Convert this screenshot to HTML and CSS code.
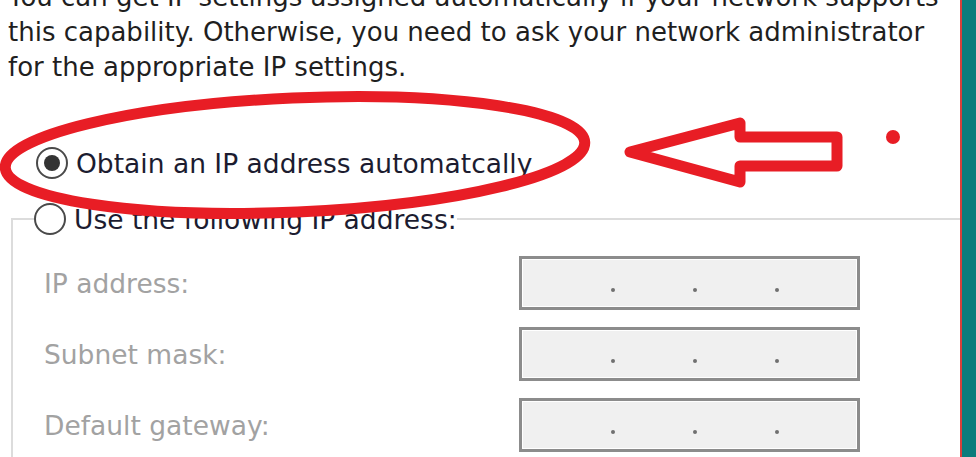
FILE: index.html
```html
<!DOCTYPE html>
<html>
<head>
    <title>Internet Protocol Version 4 Properties</title>
    <link rel="stylesheet" href="styles.css">
</head>
<body>
    <div class="page">
        <div class="dialog">
            <p class="intro">You can get IP settings assigned automatically if your network supports<br>this capability. Otherwise, you need to ask your network administrator<br>for the appropriate IP settings.</p>

            <!-- Automatic option -->
            <label class="option auto">
                <span class="radio checked"></span>
                <span>Obtain an IP address automatcally</span>
            </label>

            <!-- Manual settings group -->
            <fieldset class="group">
                <legend class="option">
                    <span class="radio"></span>
                    <span>Use the following IP address:</span>
                </legend>
                <div class="fields">
                    <span class="field-label">IP address:</span>
                    <div class="ip-box"><i></i><i></i><i></i></div>
                    <span class="field-label">Subnet mask:</span>
                    <div class="ip-box"><i></i><i></i><i></i></div>
                    <span class="field-label">Default gateway:</span>
                    <div class="ip-box"><i></i><i></i><i></i></div>
                </div>
            </fieldset>

            <!-- Red annotation drawn over the dialog -->
            <svg class="marks" width="976" height="457" viewBox="0 0 976 457">
                <ellipse cx="295" cy="155" rx="290" ry="57" transform="rotate(-2.5 295 155)" fill="none" stroke="#e81d25" stroke-width="11"/>
                <polygon points="630,152 740,123 740,137 837,137 837,166 740,166 740,182" fill="none" stroke="#e81d25" stroke-width="11" stroke-linejoin="round"/>
                <circle cx="893" cy="137" r="7" fill="#e81d25"/>
            </svg>
        </div>
        <div class="side"></div>
    </div>
</body>
</html>
```

FILE: styles.css
```css
/* IPv4 properties, zoomed in */

body {
    margin: 0;
    background: #fff;
    font-family: "DejaVu Sans", sans-serif;
    overflow: hidden;
}

.page {
    display: flex;
    width: 976px;
    height: 457px;
}

.dialog {
    flex: 1;
    position: relative;
    background: #fff;
    border-right: 2px solid #d8403c;
    overflow: hidden;
}

.side {
    width: 14px;
    background: #0b7c7c;
}

.intro {
    margin: -20px 0 0 0;
    padding: 0 0 0 8px;
    font-size: 26px;
    line-height: 35px;
    white-space: nowrap;
    color: #1f1f1f;
}

.option {
    display: flex;
    align-items: center;
    gap: 8px;
    font-size: 26.5px;
    color: #1c1c30;
}

.auto {
    margin: 62px 0 0 36px;
}

.radio {
    width: 28px;
    height: 28px;
    border: 2px solid #4a4a4a;
    border-radius: 50%;
    background: #fff;
    display: flex;
    align-items: center;
    justify-content: center;
    flex: none;
}

.radio.checked::after {
    content: "";
    width: 16px;
    height: 16px;
    border-radius: 50%;
    background: #333;
}

.group {
    margin: 24px 0 0 11px;
    padding: 0 0 20px 31px;
    border: 2px solid #dcdcdc;
    border-right: none;
}

.group legend {
    padding: 0;
    margin-left: -10px;
}

.fields {
    display: grid;
    grid-template-columns: 475px 341px;
    row-gap: 17px;
    align-items: center;
    margin-top: 21px;
}

.field-label {
    font-size: 26.5px;
    color: #a2a2a2;
}

.ip-box {
    height: 54px;
    box-sizing: border-box;
    border: 3px solid #8c8c8c;
    background: #f0f0f0;
    box-shadow: inset 0 0 0 1px #fff;
    display: flex;
    align-items: flex-end;
    gap: 78px;
    padding: 0 0 15px 89px;
}

.ip-box i {
    width: 4px;
    height: 4px;
    border-radius: 50%;
    background: #707070;
}

.marks {
    position: absolute;
    top: 0;
    left: 0;
    pointer-events: none;
}
```
